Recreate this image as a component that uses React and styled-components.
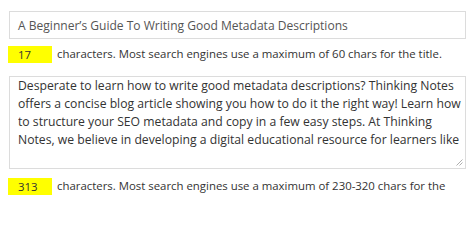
import React from 'react'
import styled, { createGlobalStyle } from 'styled-components'

const Global = createGlobalStyle`
  html, body {
    margin: 0;
    background: #fff;
    overflow: hidden;
    font-family: "Lucida Grande", "Open Sans", sans-serif;
  }
`

const Wrap = styled.div`
  height: 204px;
  box-sizing: border-box;
  overflow: hidden;
  padding: 11px 8px 0 9px;
  display: flex;
  flex-direction: column;
`

const TitleBox = styled.div`
  height: 26px;
  flex-shrink: 0;
  border: 1px solid #dcdcdc;
  background: #fff;
  display: flex;
  align-items: center;
  padding: 0 8px;
  font-size: 12.05px;
  color: #555;
  white-space: nowrap;
  overflow: hidden;
`

const CountRow = styled.div`
  display: flex;
  align-items: flex-start;
  flex-shrink: 0;
  gap: 5px;
  margin: ${p => p.$top}px 0 0 -1px;
  font-size: 11.4px;
  line-height: 30px;
  color: #333;
`

const Count = styled.span`
  width: 34px;
  height: 17px;
  line-height: 17px;
  margin-top: 7px;
  padding-left: 10px;
  background: #ffff00;
  color: #333;
  flex-shrink: 0;
`

const Note = styled.span`
  padding-right: 16px;
`

const AreaBox = styled.div`
  position: relative;
  flex-shrink: 0;
  margin-top: 7px;
  border: 1px solid #dcdcdc;
  padding: 0 0 0 8px;
  box-sizing: border-box;
  height: 93px;
`

const AreaText = styled.div`
  height: 72px;
  overflow: hidden;
  font-size: 12.2px;
  line-height: 18px;
  color: #333;
  white-space: pre;
`

const Grip = styled.svg`
  position: absolute;
  right: 2px;
  bottom: 2px;
`

const description = `Desperate to learn how to write good metadata descriptions? Thinking Notes
offers a concise blog article showing you how to do it the right way! Learn how
to structure your SEO metadata and copy in a few easy steps. At Thinking
Notes, we believe in developing a digital educational resource for learners like`

export default function App() {
  return (
    <>
      <Global />
      <Wrap>
        <TitleBox>A Beginner’s Guide To Writing Good Metadata Descriptions</TitleBox>
        <CountRow $top={0}>
          <Count>17</Count>
          <Note>characters. Most search engines use a maximum of 60 chars for the title.</Note>
        </CountRow>
        <AreaBox>
          <AreaText>{description}</AreaText>
          <Grip width="7" height="7" viewBox="0 0 7 7">
            <path d="M6.5 0.5 L0.5 6.5 M6.5 3.5 L3.5 6.5" stroke="#999" strokeWidth="0.8" fill="none" />
          </Grip>
        </AreaBox>
        <CountRow $top={2}>
          <Count>313</Count>
          <Note>characters. Most search engines use a maximum of 230-320 chars for the description.</Note>
        </CountRow>
      </Wrap>
    </>
  )
}
